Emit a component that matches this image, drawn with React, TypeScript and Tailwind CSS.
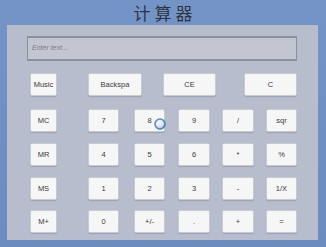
import React from "react";

const font = { fontFamily: '"Liberation Sans", Arial, sans-serif' };

function Key({ label, className }: { label: string; className: string }) {
  return (
    <button
      className={`h-[23px] bg-[#f6f6f6] border border-[#c9cbd2] rounded-[2px] shadow-[0_1px_1px_rgba(0,0,0,0.15)] text-[7.5px] text-[#3a3a3a] flex items-center justify-center ${className}`}
    >
      <span className="text-[#3a3a3a]">{label}</span>
    </button>
  );
}

const rows: string[][] = [
  ["MC", "7", "8", "9", "/", "sqr"],
  ["MR", "4", "5", "6", "*", "%"],
  ["MS", "1", "2", "3", "-", "1/X"],
  ["M+", "0", "+/-", ".", "+", "="],
];

const colClasses = [
  "ml-[23px] w-[27px]",
  "ml-[31px] w-[31px]",
  "ml-[15px] w-[31px]",
  "ml-[13px] w-[32px]",
  "ml-[12px] w-[32px]",
  "ml-[12px] w-[31px]",
];

const rowGaps = ["mt-[13px]", "mt-[11px]", "mt-[11px]", "mt-[10px]"];

export default function App() {
  return (
    <div
      className="w-[326px] h-[247px] bg-gradient-to-b from-[#7494c8] to-[#6c8cc0] overflow-hidden"
      style={font}
    >
      <div className="h-[25px] flex items-center justify-center">
        <h1
          className="text-[17px] tracking-[4px] text-[#2e3340] pl-[4px]"
          style={{ fontFamily: '"Noto Sans CJK SC", "Noto Sans", sans-serif' }}
        >
          计算器
        </h1>
      </div>

      <div className="relative ml-[7px] w-[311px] h-[215px] bg-[#b8bdcd] pt-[11px]">
        <div className="ml-[20px] w-[270px] h-[25px] bg-[#c2c6d1] border-t-2 border-b-2 border-x border-[#8c909a] flex items-start px-[4px] pt-[5px]">
          <span className="text-[7px] italic text-[#7a7e88]">Enter text...</span>
        </div>

        <div className="flex mt-[12px]">
          <Key label="Music" className="ml-[23px] w-[27px]" />
          <Key label="Backspa" className="ml-[31px] w-[54px]" />
          <Key label="CE" className="ml-[21px] w-[53px]" />
          <Key label="C" className="ml-[28px] w-[53px]" />
        </div>

        {rows.map((row, r) => (
          <div key={r} className={`flex ${rowGaps[r]}`}>
            {row.map((k, i) => (
              <Key key={k} label={k} className={colClasses[i]} />
            ))}
          </div>
        ))}

        <svg
          className="absolute left-[146px] top-[92px]"
          width="14"
          height="14"
          viewBox="0 0 14 14"
        >
          <defs>
            <radialGradient id="spin" cx="0.4" cy="0.4" r="0.6">
              <stop offset="0" stopColor="#ffffff" stopOpacity="0.9" />
              <stop offset="0.6" stopColor="#c9d8ee" stopOpacity="0.6" />
              <stop offset="1" stopColor="#5d8ac8" stopOpacity="0.9" />
            </radialGradient>
          </defs>
          <circle cx="7" cy="7" r="5.5" fill="url(#spin)" />
          <circle cx="7" cy="7" r="5" fill="none" stroke="#4a7cc0" strokeWidth="1.6" opacity="0.85" />
        </svg>
      </div>
    </div>
  );
}
